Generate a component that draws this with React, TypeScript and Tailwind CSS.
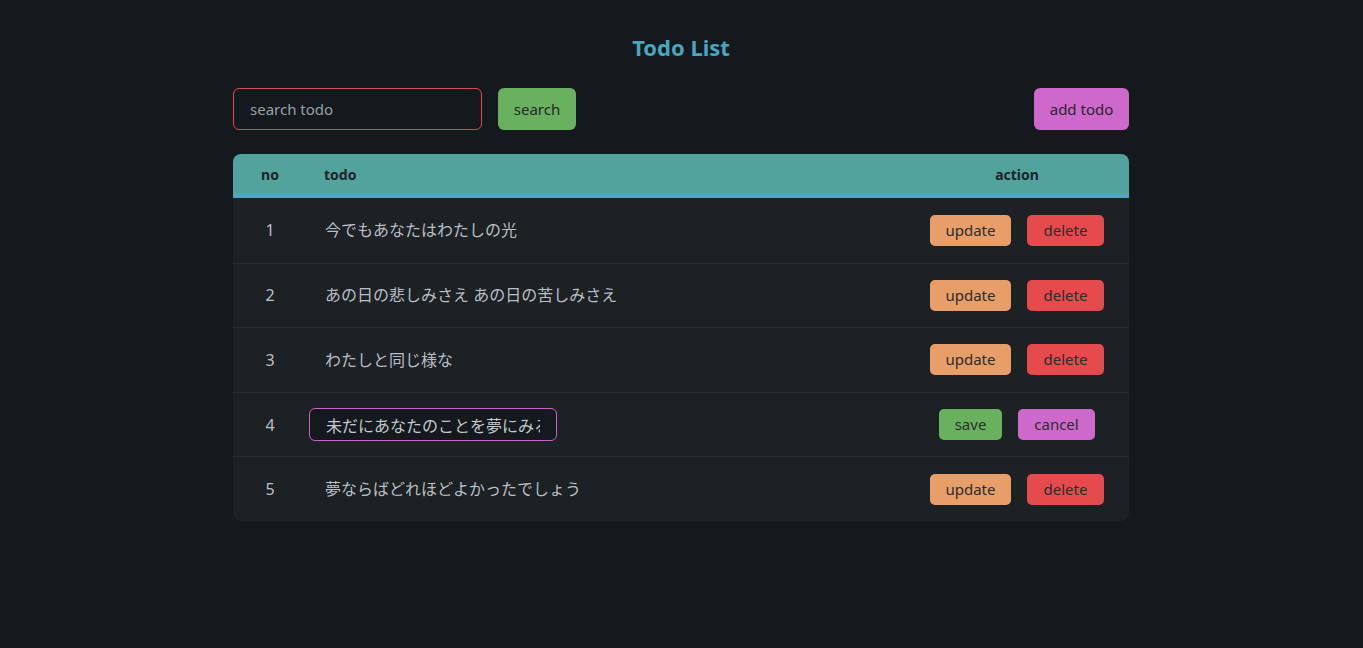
import { FC } from 'react';

interface Todo {
  id: number;
  text: string;
  editing?: boolean;
}

const todos: Todo[] = [
  { id: 1, text: '今でもあなたはわたしの光' },
  { id: 2, text: 'あの日の悲しみさえ あの日の苦しみさえ' },
  { id: 3, text: 'わたしと同じ様な' },
  { id: 4, text: '未だにあなたのことを夢にみる', editing: true },
  { id: 5, text: '夢ならばどれほどよかったでしょう' }
];

const font = { fontFamily: '"Noto Sans", "Noto Sans CJK JP", sans-serif' };

const Btn: FC<{ label: string; color: string; width: string }> = ({ label, color, width }) => (
  <button className={`${color} ${width} h-[31px] rounded-[5px] text-[15px] text-[#2b2d2f] leading-none`}>
    {label}
  </button>
);

const App: FC = () => {
  return (
    <div className="min-h-[648px] bg-[#13191c] pr-[1px] text-[#b9bfc4]" style={font}>
      <div className="mx-auto w-[896px] pt-[32px]">
        <h1 className="text-center text-[22px] font-bold leading-[30px] text-[#4aa5bf]">Todo List</h1>

        <div className="mt-[26px] flex items-center justify-between">
          <div className="flex items-center gap-4">
            <input
              placeholder="search todo"
              className="h-[42px] w-[249px] rounded-[6px] border border-[#dc4a55] bg-[#13191c] px-4 text-[15px] text-[#b9bfc4] placeholder:text-[#9aa0a5] outline-none"
            />
            <button className="h-[42px] w-[78px] rounded-[6px] bg-[#69b15f] text-[15px] text-[#23282b]">
              search
            </button>
          </div>
          <button className="h-[42px] w-[95px] rounded-[6px] bg-[#cd69cb] text-[15px] text-[#2d2330]">
            add todo
          </button>
        </div>

        <div className="mt-6 overflow-hidden rounded-[8px] bg-[#1c2124]">
          <div className="grid h-[44px] grid-cols-[74px_1fr_224px] items-center border-b-4 border-[#4ea5c4] bg-[#52a29e] text-[14px] font-bold text-[#1d2427]">
            <div className="text-center">no</div>
            <div className="pl-[17px]">todo</div>
            <div className="text-center">action</div>
          </div>
          {todos.map((t, i) => (
            <div
              key={t.id}
              className={`grid h-[64.6px] grid-cols-[74px_1fr_224px] items-center text-[16px] ${
                i > 0 ? 'border-t border-[#262c30]' : ''
              }`}
            >
              <div className="text-center">{t.id}</div>
              <div className="pl-[18px]">
                {t.editing ? (
                  <input
                    defaultValue={t.text}
                    className="-ml-4 h-[33px] w-[248px] rounded-[6px] border border-[#cd5fce] bg-[#13191c] px-4 text-[16px] text-[#c4c9cd] outline-none"
                  />
                ) : (
                  t.text
                )}
              </div>
              <div className="flex items-center justify-center gap-4">
                {t.editing ? (
                  <>
                    <Btn label="save" color="bg-[#69b15f]" width="w-[63px]" />
                    <Btn label="cancel" color="bg-[#cd69cb]" width="w-[77px]" />
                  </>
                ) : (
                  <>
                    <Btn label="update" color="bg-[#e79e69]" width="w-[81px]" />
                    <Btn label="delete" color="bg-[#e54a4d]" width="w-[77px]" />
                  </>
                )}
              </div>
            </div>
          ))}
        </div>
      </div>
    </div>
  );
};

export default App;
